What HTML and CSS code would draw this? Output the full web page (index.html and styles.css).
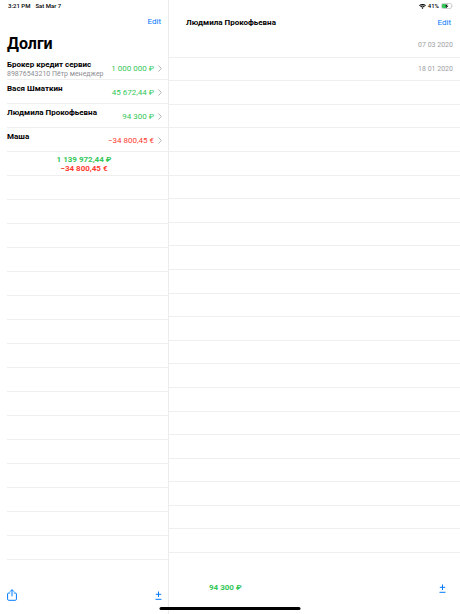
FILE: index.html
```
<!DOCTYPE html>
<html lang="ru">
<head>
  <meta charset="utf-8">
  <meta name="viewport" content="width=device-width, initial-scale=1">
  <title>Долги</title>
  <link rel="stylesheet" href="styles.css">
</head>
<body>
  <aside class="sidebar">
    <div class="status">
      <span>3:21 PM</span>
      <span>Sat Mar 7</span>
    </div>
    <header class="sidebar-header">
      <button class="edit">Edit</button>
      <h1>Долги</h1>
    </header>
    <ul class="rows debts">
      <li>
        <a href="#" class="debt">
          <span class="person"><b>Брокер кредит сервис</b><small>89876543210 Пётр менеджер</small></span>
          <span class="amount plus">1 000 000 ₽</span>
          <svg class="chevron" viewBox="0 0 4 7"><path d="M0.5 0.5L3.3 3.5L0.5 6.5"/></svg>
        </a>
      </li>
      <li>
        <a href="#" class="debt">
          <span class="person"><b>Вася Шматкин</b></span>
          <span class="amount plus">45 672,44 ₽</span>
          <svg class="chevron" viewBox="0 0 4 7"><path d="M0.5 0.5L3.3 3.5L0.5 6.5"/></svg>
        </a>
      </li>
      <li>
        <a href="#" class="debt">
          <span class="person"><b>Людмила Прокофьевна</b></span>
          <span class="amount plus">94 300 ₽</span>
          <svg class="chevron" viewBox="0 0 4 7"><path d="M0.5 0.5L3.3 3.5L0.5 6.5"/></svg>
        </a>
      </li>
      <li>
        <a href="#" class="debt">
          <span class="person"><b>Маша</b></span>
          <span class="amount minus">−34 800,45 €</span>
          <svg class="chevron" viewBox="0 0 4 7"><path d="M0.5 0.5L3.3 3.5L0.5 6.5"/></svg>
        </a>
      </li>
      <li class="total">
        <span class="plus">1 139 972,44 ₽</span>
        <span class="minus">−34 800,45 €</span>
      </li>
      <li></li><li></li><li></li><li></li>
      <li></li><li></li><li></li><li></li>
      <li></li><li></li><li></li><li></li>
      <li></li><li></li><li></li><li></li>
    </ul>
    <footer class="toolbar sidebar-toolbar">
      <button class="icon" aria-label="Share">
        <svg width="10" height="12" viewBox="0 0 10 12"><path d="M3.2 4H1.6Q0.6 4 0.6 5V10.2Q0.6 11.3 1.6 11.3H8.4Q9.4 11.3 9.4 10.2V5Q9.4 4 8.4 4H6.8M5 7.4V0.8M3 2.7L5 0.7L7 2.7"/></svg>
      </button>
      <button class="icon" aria-label="Add debt">
        <svg width="7" height="9" viewBox="0 0 7 9"><path d="M3.5 0.5V6M0.8 3.3H6.2M0.5 8.3H6.5"/></svg>
      </button>
    </footer>
  </aside>

  <main class="detail">
    <div class="status status-right">
      <svg width="7" height="5" viewBox="0 0 14 10"><path d="M7 10L4.8 7.6Q7 5.8 9.2 7.6ZM3.8 6.5L2.4 5.1Q7 1.3 11.6 5.1L10.2 6.5Q7 3.8 3.8 6.5ZM1.5 4.1L0 2.6Q7-2.6 14 2.6L12.5 4.1Q7-.4 1.5 4.1Z"/></svg>
      <span>41%</span>
      <svg width="12" height="6" viewBox="0 0 24 12">
        <rect x="1" y="1" width="20" height="10" rx="3" fill="#fff" stroke="#a5a5a5"/>
        <rect x="2" y="2" width="9" height="8" rx="2" fill="#34c759"/>
        <path d="M13 1.5L8 6.7H11L9.5 10.8L15 5.4H11.8Z"/>
        <path d="M22.5 4Q24 6 22.5 8Z" fill="#a5a5a5"/>
      </svg>
    </div>
    <header class="detail-header">
      <h2>Людмила Прокофьевна</h2>
      <button class="edit">Edit</button>
    </header>
    <ul class="rows records">
      <li><time datetime="2020-03-07">07 03 2020</time></li>
      <li><time datetime="2020-01-18">18 01 2020</time></li>
      <li></li><li></li><li></li><li></li><li></li>
      <li></li><li></li><li></li><li></li><li></li>
      <li></li><li></li><li></li><li></li><li></li>
      <li></li><li></li><li></li><li></li><li></li>
    </ul>
    <footer class="toolbar detail-toolbar">
      <span class="plus">94 300 ₽</span>
      <button class="icon" aria-label="Add record">
        <svg width="7" height="9" viewBox="0 0 7 9"><path d="M3.5 0.5V6M0.8 3.3H6.2M0.5 8.3H6.5"/></svg>
      </button>
    </footer>
  </main>

  <div class="home-indicator"></div>
</body>
</html>
```
FILE: styles.css
```
* {
  box-sizing: border-box;
}
body {
  margin: 0;
  min-height: 100vh;
  display: grid;
  grid-template-columns: 169px 1fr;
  font-family: Roboto, "Noto Sans", sans-serif;
  font-size: 8px;
  line-height: 10px;
  color: #000;
  background: #fff;
}
h1, h2, ul {
  margin: 0;
  padding: 0;
}
button {
  padding: 0;
  border: none;
  background: none;
  font: inherit;
  cursor: pointer;
}
a {
  color: inherit;
  text-decoration: none;
}
.sidebar, .detail {
  display: flex;
  flex-direction: column;
  min-width: 0;
}
.sidebar {
  border-right: 1px solid #ececec;
}

/* status bar */
.status {
  display: flex;
  align-items: center;
  gap: 5px;
  height: 12px;
  padding-left: 8px;
  font-size: 6px;
  font-weight: 500;
}
.status-right {
  justify-content: flex-end;
  gap: 2px;
  padding: 0 7px;
}

/* headers */
.edit {
  color: #007aff;
}
.sidebar-header {
  display: flex;
  flex-direction: column;
  height: 44px;
  padding: 5px 7px 0;
}
.sidebar-header .edit {
  align-self: flex-end;
}
h1 {
  font-size: 16px;
  line-height: 18px;
  margin-top: 8px;
}
.detail-header {
  display: flex;
  justify-content: space-between;
  align-items: center;
  height: 22px;
  padding: 0 9px 0 17px;
}
h2 {
  font-size: 8px;
  font-weight: 700;
}

/* ruled lists, rows share the free height */
.rows {
  flex: 1;
  display: flex;
  flex-direction: column;
  list-style: none;
}
.rows li {
  flex: 1 0 20px;
  border-bottom: 1px solid #efefef;
}
.debts {
  padding-left: 7px;
}
.debt {
  display: flex;
  align-items: center;
  height: 100%;
  padding-right: 6px;
}
.person {
  flex: 1;
  align-self: flex-start;
  display: flex;
  flex-direction: column;
  min-width: 0;
  padding-top: 4px;
  white-space: nowrap;
}
.person b {
  font-weight: 700;
}
.person small {
  font-size: 7px;
  line-height: 8px;
  color: #8e8e93;
}
.amount {
  padding-top: 2px;
}
.chevron {
  width: 4px;
  height: 7px;
  margin: 2px 0 0 4px;
  fill: none;
  stroke: #b4b4b8;
}
.plus {
  color: #34c759;
}
.minus {
  color: #ff3b30;
}
.total {
  display: flex;
  flex-direction: column;
  justify-content: center;
  align-items: center;
  padding-right: 7px;
  font-weight: 700;
  line-height: 9px;
}
.records li {
  display: flex;
  justify-content: flex-end;
  align-items: center;
  padding-right: 7px;
  font-size: 7px;
  color: #a0a0a5;
}

/* bottom bars */
.toolbar {
  display: flex;
  justify-content: space-between;
  align-items: center;
}
.sidebar-toolbar {
  height: 54px;
  padding: 16px 6px 0 7px;
}
.detail-toolbar {
  height: 61px;
  padding: 9px 14px 0 40px;
  font-weight: 700;
}
.icon {
  display: flex;
}
.icon svg {
  fill: none;
  stroke: #007aff;
}
.home-indicator {
  position: absolute;
  bottom: 4px;
  left: 50%;
  width: 141px;
  height: 3px;
  border-radius: 2px;
  background: #000;
  transform: translateX(-50%);
}
```
